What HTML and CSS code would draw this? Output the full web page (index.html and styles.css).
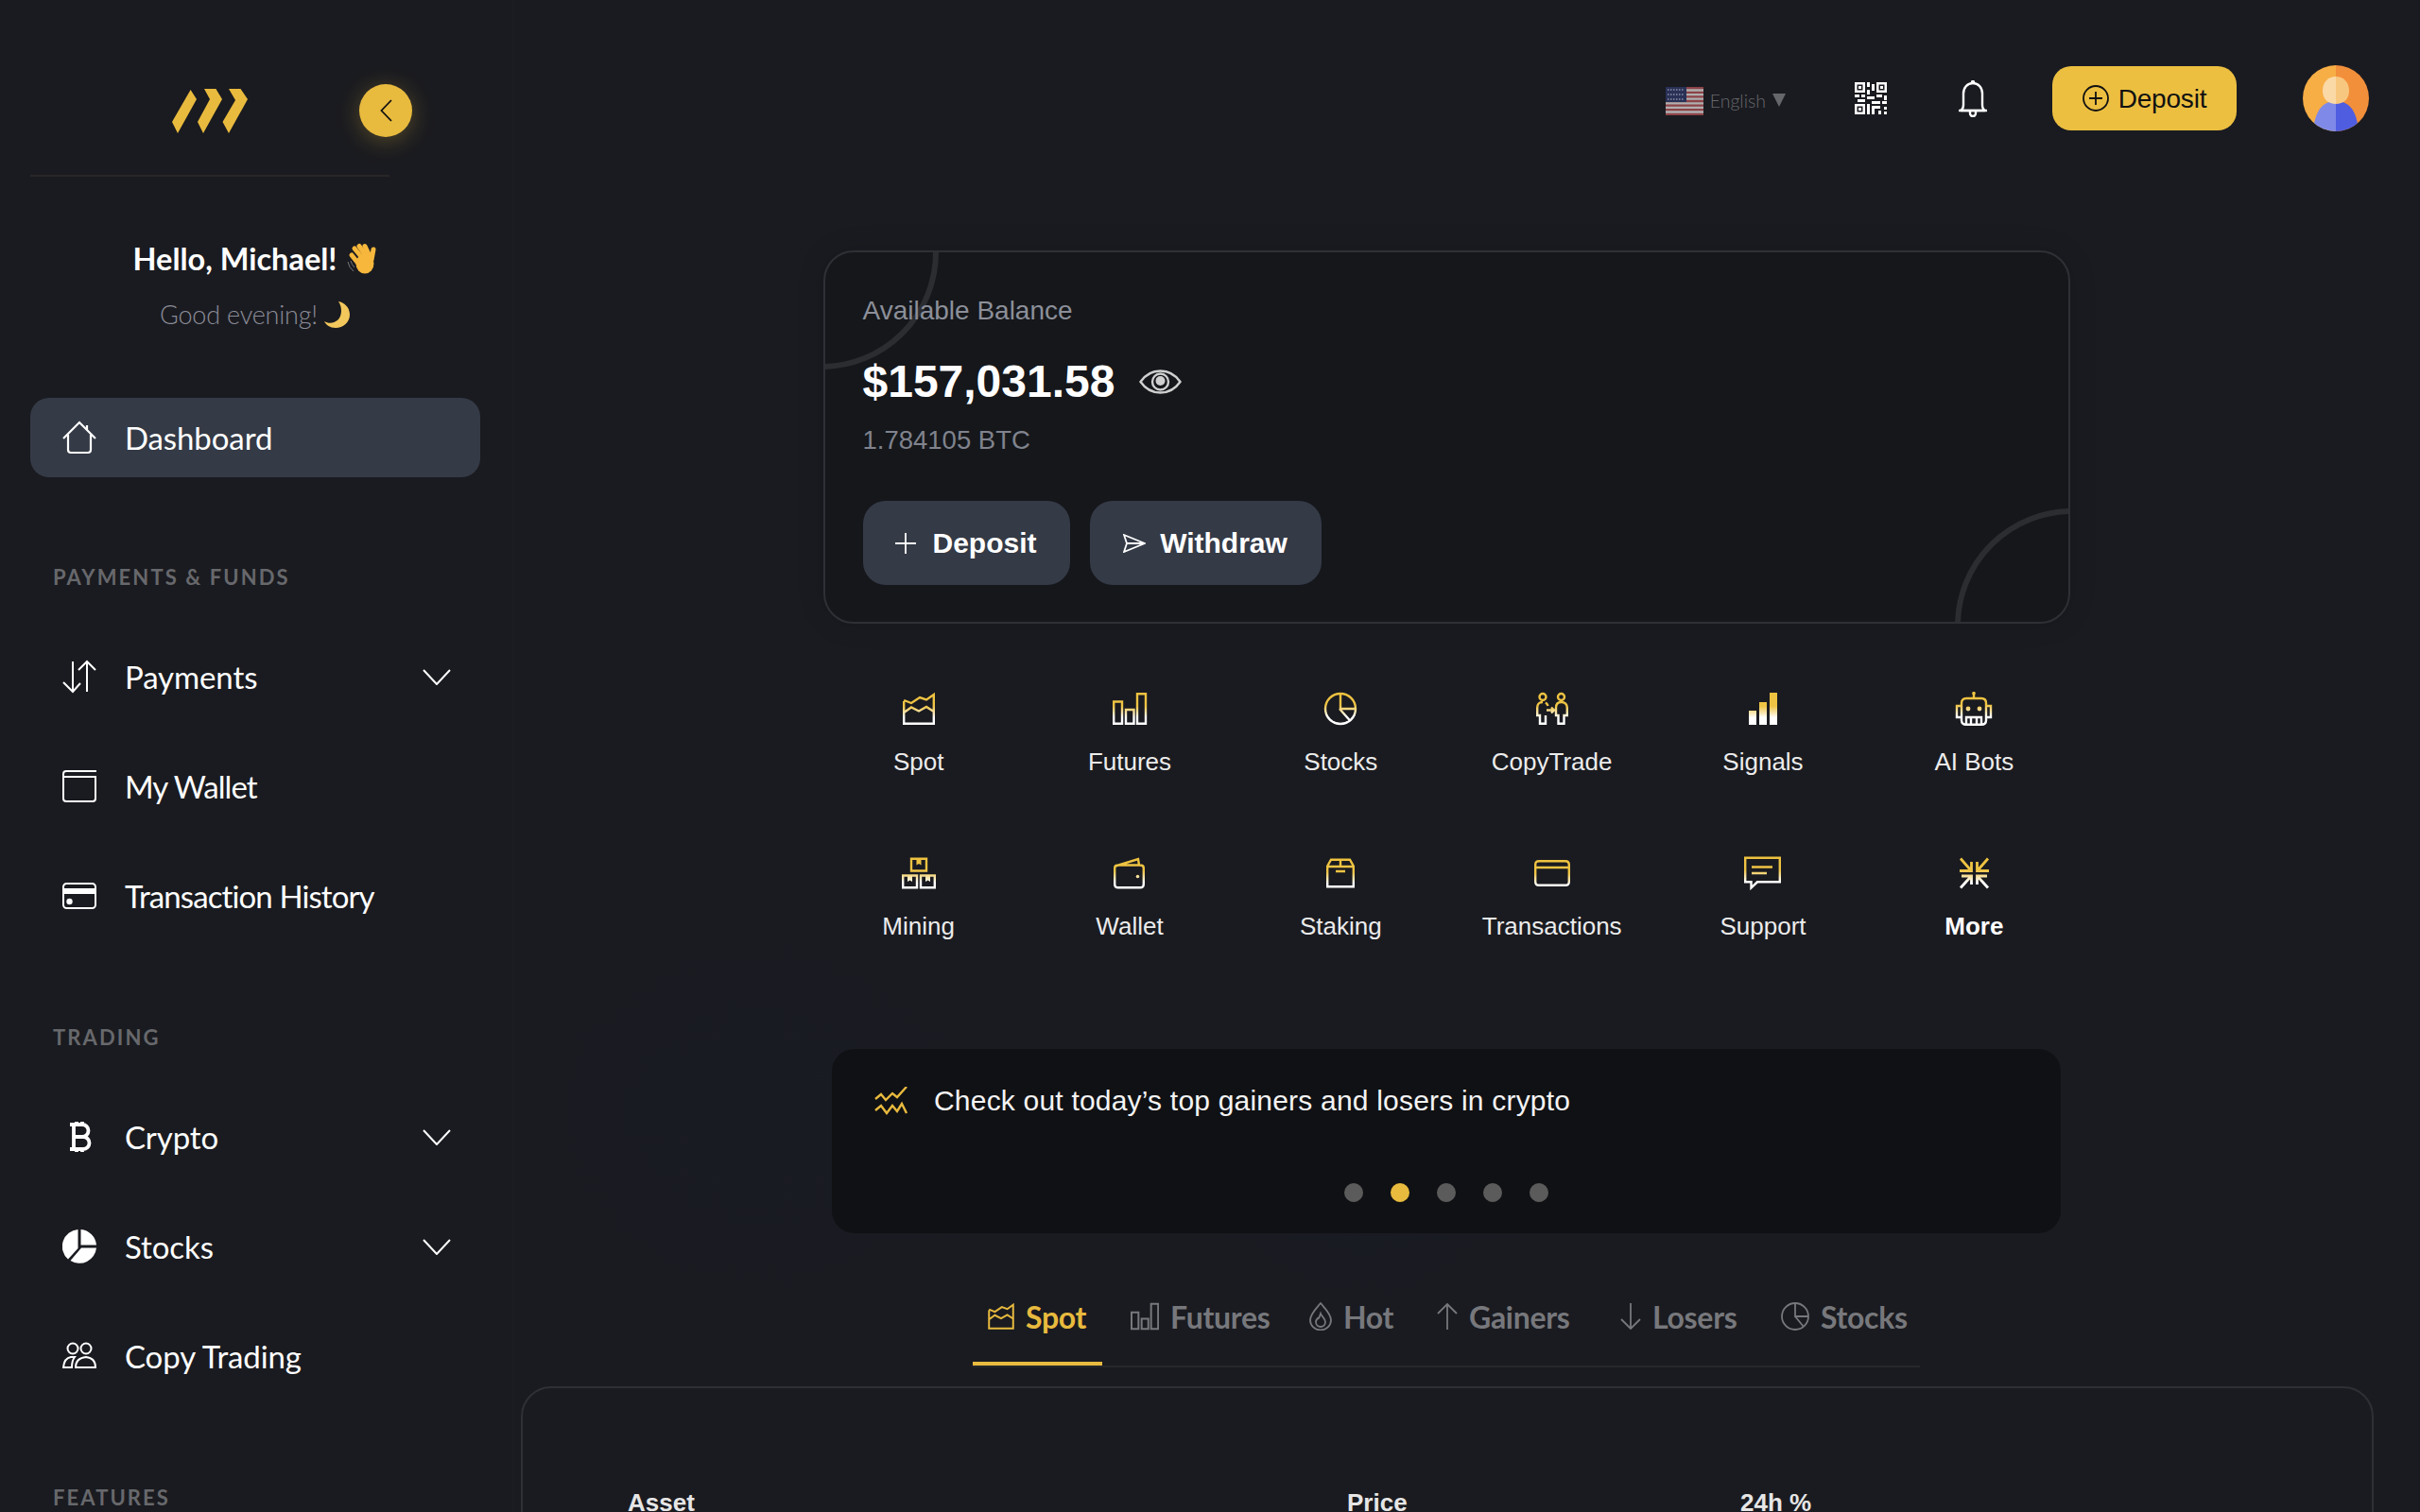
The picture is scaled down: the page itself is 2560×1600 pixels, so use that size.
FILE: index.html
```html
<!DOCTYPE html>
<html lang="en">
<head>
  <meta charset="UTF-8" />
  <meta name="viewport" content="width=device-width, initial-scale=1" />
  <title>Dashboard</title>
  <link rel="stylesheet" href="styles.css">
</head>
<body>
  <svg class="svg-defs" aria-hidden="true">
    <defs>
      <linearGradient id="gold" gradientUnits="userSpaceOnUse" x1="0" y1="0" x2="0" y2="34">
        <stop offset="0" stop-color="#eec23f" />
        <stop offset="0.42" stop-color="#efc445" />
        <stop offset="0.78" stop-color="#ffffff" />
      </linearGradient>
    </defs>
  </svg>

  <div class="app">
    <aside class="sidebar">
      <div class="brand">
        <svg class="logo" width="80" height="47" viewBox="0 0 80 47">
          <path d="M19.6 1 26 11 6 47 0 35Z M34 0H46.4L53 11 33 47 27 35 40 11Z M60 0H72.5L80 11 60 47 53.5 35 67 12Z" fill="#e8ba3e" />
        </svg>
        <button class="collapse">
          <svg width="13" height="24" viewBox="0 0 13 24"><path d="M12 1 1.500 12 12 23" fill="none" stroke="#111" stroke-width="1.800" /></svg>
        </button>
      </div>

      <div class="greeting">
        <div class="hello">Hello, Michael!
          <svg width="34" height="34" viewBox="0 0 34 34">
            <g stroke="#f6b73c" stroke-linecap="round" fill="none">
              <path d="M9 6 19 18" stroke-width="5" />
              <path d="M14 3.500 22 15" stroke-width="5" />
              <path d="M20 3.500 25 14" stroke-width="5" />
              <path d="M29 7 27 18" stroke-width="5" />
              <path d="M6 13 14 23" stroke-width="5" />
            </g>
            <ellipse cx="20" cy="22" rx="9.500" ry="10.500" fill="#f6b73c" />
            <path d="M2 20q1 6 6 10M5 19q1 4 4 7" stroke="#77787c" fill="none" />
          </svg>
        </div>
        <div class="subhello">Good evening!
          <svg width="28" height="28" viewBox="0 0 28 28">
            <path d="M15 0C21 1 27 6 27 14 27 22 20 28 12 28 6 28 2 25 0 21 5 24 11 23 15 19 19 14 19 6 15 0Z" fill="#f2c75c" />
          </svg>
        </div>
      </div>

      <a class="nav-link active">
        <svg class="nav-icon" viewBox="0 0 36 36"><path d="M1 19 18 2 35 19M6 15V31a3 3 0 0 0 3 3H27a3 3 0 0 0 3-3V15M26 5V10" fill="none" stroke="#fff" stroke-width="2.200" /></svg>
        Dashboard
      </a>

      <section class="nav-section">
        <h3 class="nav-label">PAYMENTS &amp; FUNDS</h3>
        <div class="nav-list">
          <a class="nav-link">
            <svg class="nav-icon" viewBox="0 0 36 36"><path d="M11 2V34M1 24 11 34 19 25M26 34V2M17 11 26 2 35 11" fill="none" stroke="#fff" stroke-width="2" /></svg>
            Payments
            <svg class="chevron" width="30" height="17" viewBox="0 0 30 17"><path d="M1 1 15 16 29 1" fill="none" stroke="#fff" stroke-width="2" /></svg>
          </a>
          <a class="nav-link nav-tight">
            <svg class="nav-icon" viewBox="0 0 36 36"><path d="M36 2H4A3 3 0 0 0 1 5V31a3 3 0 0 0 3 3H32a3 3 0 0 0 3-3V8H1" fill="none" stroke="#fff" stroke-width="2" /></svg>
            My Wallet
          </a>
          <a class="nav-link nav-tight">
            <svg class="nav-icon" viewBox="0 0 36 36">
              <rect x="1" y="5" width="34" height="26" rx="3.500" fill="none" stroke="#fff" stroke-width="2" />
              <rect x="1" y="10" width="34" height="6" fill="#fff" />
              <circle cx="7.500" cy="24" r="3.200" fill="#fff" />
            </svg>
            Transaction History
          </a>
        </div>
      </section>

      <section class="nav-section">
        <h3 class="nav-label">TRADING</h3>
        <div class="nav-list">
          <a class="nav-link">
            <svg class="nav-icon" viewBox="0 0 36 36"><path d="M8 5H21a6.500 6.500 0 0 1 0 13H11M11 18H22a6.500 6.500 0 0 1 0 13H8M12 5V31M15 2V5M21 2V5M15 31V34M21 31V34" fill="none" stroke="#fff" stroke-width="3.800" /></svg>
            Crypto
            <svg class="chevron" width="30" height="17" viewBox="0 0 30 17"><path d="M1 1 15 16 29 1" fill="none" stroke="#fff" stroke-width="2" /></svg>
          </a>
          <a class="nav-link">
            <svg class="nav-icon" viewBox="0 0 36 36">
              <path d="M16.500 0A18 18 0 0 0 6 31.500L16.500 20ZM19.500 0V16.500H36A18 18 0 0 0 19.500 0ZM20 19.500 8.500 33A18 18 0 0 0 36 19.500Z" fill="#fff" />
            </svg>
            Stocks
            <svg class="chevron" width="30" height="17" viewBox="0 0 30 17"><path d="M1 1 15 16 29 1" fill="none" stroke="#fff" stroke-width="2" /></svg>
          </a>
          <a class="nav-link">
            <svg class="nav-icon" viewBox="0 0 36 36" fill="none" stroke="#fff" stroke-width="2">
              <circle cx="11" cy="10" r="5.500" /><circle cx="25" cy="10" r="5.500" />
              <path d="M13 19H9Q2 20 1 30H10Q10 23 13 19Z" />
              <path d="M14 30Q14 20 25 19 35 20 35 30Z" />
            </svg>
            Copy Trading
          </a>
        </div>
      </section>

      <section class="nav-section">
        <h3 class="nav-label">FEATURES</h3>
      </section>
    </aside>

    <main class="main">
      <header class="topbar">
        <div class="lang">
          <svg class="flag" width="40" height="30" viewBox="0 0 40 30">
            <rect width="40" height="30" fill="#c9c9c9" />
            <path d="M0 1.200H40M0 5.800H40M0 10.400H40M0 15H40M0 19.600H40M0 24.200H40M0 28.800H40" stroke="#a24a50" stroke-width="2.300" />
            <rect width="22" height="16" fill="#2c3560" />
            <path d="M2 3H20M2 8H20M2 13H20" stroke="#9ea3bd" stroke-width="1.400" stroke-dasharray="1.500 1.500" />
          </svg>
          <span class="lang-name">English</span>
          <span class="lang-caret"></span>
        </div>

        <svg class="qr" width="34" height="34" viewBox="0 0 34 34" fill="#fff">
          <path fill-rule="evenodd" d="M0 0H11V11H0ZM2.500 2.500V8.500H8.500V2.500Z M23 0H34V11H23ZM25.500 2.500V8.500H31.500V2.500Z M0 23H11V34H0ZM2.500 25.500V31.500H8.500V25.500Z" />
          <rect x="4" y="4" width="3" height="3" /><rect x="27" y="4" width="3" height="3" /><rect x="4" y="27" width="3" height="3" />
          <rect x="13" y="0" width="3" height="5" /><rect x="18" y="2" width="3" height="7" /><rect x="13" y="8" width="3" height="5" />
          <rect x="0" y="13" width="5" height="3" /><rect x="7" y="13" width="4" height="3" /><rect x="3" y="18" width="8" height="3" />
          <rect x="13" y="15" width="8" height="3" /><rect x="23" y="13" width="6" height="3" /><rect x="31" y="14" width="3" height="5" />
          <rect x="18" y="20" width="9" height="3" /><rect x="29" y="20" width="5" height="3" /><rect x="13" y="23" width="3" height="11" />
          <rect x="18" y="25" width="9" height="3" /><rect x="18" y="28" width="3" height="6" /><rect x="25" y="30" width="3" height="4" /><rect x="31" y="26" width="3" height="3" /><rect x="31" y="31" width="3" height="3" />
        </svg>

        <svg class="bell" width="30" height="39" viewBox="0 0 30 39" fill="none" stroke="#fff" stroke-width="2.400">
          <path d="M15 3C9 3 5 8 5 14V26C5 29 4 31 2 32H28C26 31 25 29 25 26V14C25 8 21 3 15 3Z" />
          <path d="M0 32H30" />
          <path d="M12 33V35a3 3 0 0 0 6 0V33" />
          <circle cx="15" cy="2" r="1" />
        </svg>

        <button class="btn-deposit">
          <svg width="28" height="28" viewBox="0 0 28 28" fill="none" stroke="#111" stroke-width="1.800">
            <circle cx="14" cy="14" r="13" /><path d="M14 7V21M7 14H21" />
          </svg>
          <span class="btn-deposit-text">Deposit</span>
        </button>

        <svg class="avatar" width="70" height="70" viewBox="0 0 70 70">
          <defs><clipPath id="round"><circle cx="35" cy="35" r="35" /></clipPath></defs>
          <g clip-path="url(#round)">
            <rect width="35" height="70" fill="#f7ae45" />
            <rect x="35" width="35" height="70" fill="#f28f3b" />
            <path d="M35 38C23 38 13 45 11 70H35Z" fill="#7f8ae8" />
            <path d="M35 38C47 38 57 45 59 70H35Z" fill="#4f5de0" />
            <path d="M35 12C27 12 21 18 21 27 21 36 27 41 35 41Z" fill="#fbd9a7" />
            <path d="M35 12C43 12 49 18 49 27 49 36 43 41 35 41Z" fill="#f8c77f" />
          </g>
        </svg>
      </header>

      <section class="balance-card">
        <div class="ring ring-top"></div>
        <div class="ring ring-bottom"></div>
        <div class="balance-label">Available Balance</div>
        <div class="balance-row">
          <span class="balance-amount">$157,031.58</span>
          <svg width="45" height="26" viewBox="0 0 45 26" fill="none" stroke="#cfcfcf" stroke-width="2.400">
            <path d="M1.500 13C7 5 14 1.500 22.500 1.500S38 5 43.500 13C38 21 31 24.500 22.500 24.500S7 21 1.500 13Z" />
            <circle cx="22.500" cy="13" r="8.500" />
            <circle cx="22.500" cy="12" r="5" fill="#cfcfcf" stroke="none" />
          </svg>
        </div>
        <div class="balance-btc">1.784105 BTC</div>
        <div class="balance-actions">
          <button class="btn-dark btn-dark-deposit">
            <svg width="22" height="22" viewBox="0 0 22 22"><path d="M11 0V22M0 11H22" stroke="#fff" stroke-width="1.800" /></svg>
            Deposit
          </button>
          <button class="btn-dark btn-dark-withdraw">
            <svg width="24" height="20" viewBox="0 0 24 20" fill="none" stroke="#fff" stroke-width="1.800"><path d="M1 1 23 10 1 19 4 10ZM4 10H23" /></svg>
            Withdraw
          </button>
        </div>
      </section>

      <section class="tiles">
        <div class="tile">
          <svg class="tile-icon" width="34" height="34" viewBox="0 0 34 34"><path class="gs" d="M1.200 9V32.800H32.800V2L25 7.500 18 5 9 11 1.200 8M1.200 21 9 15.500 17 19.500 25 15 32.800 20" /></svg>
          <span>Spot</span>
        </div>
        <div class="tile">
          <svg class="tile-icon" width="36" height="34" viewBox="0 0 36 34"><path class="gs" d="M1.200 9.500H10V32.800H1.200ZM14 18H22.500V32.800H14ZM26 1.200H35V32.800H26Z" /></svg>
          <span>Futures</span>
        </div>
        <div class="tile">
          <svg class="tile-icon" width="36" height="36" viewBox="0 0 36 36"><circle class="gs" cx="18" cy="18" r="16" /><path class="gs" d="M18 2V18H34M17 18 28.500 31" /></svg>
          <span>Stocks</span>
        </div>
        <div class="tile">
          <svg class="tile-icon" width="34" height="34" viewBox="0 0 34 34">
            <circle class="gs" cx="7" cy="4.500" r="3.500" /><circle class="gs" cx="26.500" cy="4.500" r="3.500" />
            <path class="gs" d="M7 10Q1.200 10 1.200 16V24H4V32.800H10V24M26.500 10Q21 10 21 16V24H23.500V32.800H29.500V24H32.800V16Q32.800 10 26.500 10ZM10 10.500Q12 12 12.500 14M11 18.500H19M16 15.500 19 18.500 16 21.500" />
          </svg>
          <span>CopyTrade</span>
        </div>
        <div class="tile">
          <svg class="tile-icon" width="30" height="34" viewBox="0 0 30 34"><path class="gf" d="M0 19H8V34H0ZM11 10H19V34H11ZM22 0H30V34H22Z" /></svg>
          <span>Signals</span>
        </div>
        <div class="tile">
          <svg class="tile-icon" width="40" height="36" viewBox="0 0 40 36">
            <path class="gs" d="M20 0V7M12 7H28Q33 7 33 12V30Q33 34.800 28 34.800H12Q7 34.800 7 30V12Q7 7 12 7ZM7 15H2V27H7M33 15H38V27H33M12 34V27H28V34M17 27V34M23 27V34" />
            <circle cx="20" cy="1.800" r="1.800" fill="url(#gold)" />
            <circle cx="14" cy="18" r="2.400" fill="url(#gold)" /><circle cx="26" cy="18" r="2.400" fill="url(#gold)" />
          </svg>
          <span>AI Bots</span>
        </div>

        <div class="tile">
          <svg class="tile-icon" width="36" height="33" viewBox="0 0 36 33">
            <path class="gs" d="M10 1.200H26V14H10ZM1.200 19H16V31.800H1.200ZM20 19H34.800V31.800H20Z" />
            <path class="gf" d="M15.500 1.500H20.500V8L18 6.500 15.500 8ZM6 19H11V25.500L8.500 24 6 25.500ZM25 19H30V25.500L27.500 24 25 25.500Z" />
          </svg>
          <span>Mining</span>
        </div>
        <div class="tile">
          <svg class="tile-icon" width="33" height="33" viewBox="0 0 33 33">
            <path class="gs" d="M1.200 11Q1.200 8 5 8H28Q31.800 8 31.800 11V28Q31.800 31.800 28 31.800H5Q1.200 31.800 1.200 28ZM2 9 26 1.500 27 8" />
            <circle cx="25.500" cy="20" r="1.800" fill="url(#gold)" />
          </svg>
          <span>Wallet</span>
        </div>
        <div class="tile">
          <svg class="tile-icon" width="30" height="31" viewBox="0 0 30 31">
            <path class="gs" d="M1.200 8V29.800H28.800V8L25 1.200H5ZM1.200 8.500H28.800M15 1.500V8.500M10 13.500H20" />
          </svg>
          <span>Staking</span>
        </div>
        <div class="tile">
          <svg class="tile-icon" width="38" height="28" viewBox="0 0 38 28">
            <path class="gs" d="M5 1.200H33Q36.800 1.200 36.800 5V23Q36.800 26.800 33 26.800H5Q1.200 26.800 1.200 23V5Q1.200 1.200 5 1.200ZM1.200 8H36.800" />
          </svg>
          <span>Transactions</span>
        </div>
        <div class="tile">
          <svg class="tile-icon" width="39" height="35" viewBox="0 0 39 35">
            <path class="gs" d="M1.200 1.200H37.800V26.800H14L7.500 33V26.800H1.200ZM8 11H30M8 17.500H24" />
          </svg>
          <span>Support</span>
        </div>
        <div class="tile tile-more">
          <svg class="tile-icon" width="35" height="34" viewBox="0 0 35 34">
            <path class="gs gs-bold" d="M3 1.500 13 13M2 14.500H14.500V5M32 1.500 22 13M33 14.500H20.500V5M13 21.500 3 32.500M4 20H14.500V29M22 21.500 32 32.500M31 20H20.500V29" />
          </svg>
          <span>More</span>
        </div>
      </section>

      <section class="banner">
        <div class="banner-text">
          <svg width="36" height="30" viewBox="0 0 36 30" fill="none" stroke="#e8ba3e" stroke-width="2.400">
            <path d="M1 13 7 8 12 14 19 7 24 11 34 0M1 25 7 20 13 28 19 20 24 26 29 18 34 28" />
          </svg>
          Check out today’s top gainers and losers in crypto
        </div>
        <div class="dots">
          <span class="dot"></span>
          <span class="dot dot-active"></span>
          <span class="dot"></span>
          <span class="dot"></span>
          <span class="dot"></span>
        </div>
      </section>

      <nav class="tabs">
        <a class="tab tab-active">
          <svg width="28" height="30" viewBox="0 0 34 34"><path d="M1.500 9V32.500H32.500V2L25 7.500 18 5 9 11 1.500 8M1.500 21 9 15.500 17 19.500 25 15 32.500 20" fill="none" stroke="currentColor" stroke-width="2.400" /></svg>
          Spot
        </a>
        <a class="tab">
          <svg width="30" height="30" viewBox="0 0 36 34"><path d="M1.200 12H10V32.800H1.200ZM14 20H22.500V32.800H14ZM26 1.200H35V32.800H26Z" fill="none" stroke="currentColor" stroke-width="2.400" /></svg>
          Futures
        </a>
        <a class="tab">
          <svg width="24" height="30" viewBox="0 0 24 30" fill="none" stroke="currentColor" stroke-width="1.800"><path d="M12 1C16 6 23 12 23 19A11 10.500 0 0 1 1 19C1 12 8 6 12 1Z" /><path d="M12 12C13 15 17 17 17 21A5 5 0 0 1 7 21C7 19 8 18 9 17 10 18 11 15 12 12Z" /></svg>
          Hot
        </a>
        <a class="tab">
          <svg width="22" height="28" viewBox="0 0 22 28"><path d="M11 28V1M1 11 11 1 21 11" fill="none" stroke="currentColor" stroke-width="1.800" /></svg>
          Gainers
        </a>
        <a class="tab">
          <svg width="22" height="28" viewBox="0 0 22 28"><path d="M11 0V27M1 17 11 27 21 17" fill="none" stroke="currentColor" stroke-width="1.800" /></svg>
          Losers
        </a>
        <a class="tab">
          <svg width="30" height="30" viewBox="0 0 30 30" fill="none" stroke="currentColor" stroke-width="1.800"><circle cx="15" cy="15" r="14" /><path d="M15 1V15H29M15 15 24 26" /></svg>
          Stocks
        </a>
      </nav>

      <section class="market">
        <div class="market-head">
          <span>Asset</span>
          <span>Price</span>
          <span>24h %</span>
        </div>
      </section>
    </main>
  </div>
</body>
</html>
```

FILE: styles.css
```css
:root {
  --bg-color: #1a1b20;
  --card-color: #15171b;
  --line-color: #2e3035;
  --btn-color: #343a46;
  --gold: #e8ba3e;
}
* {
  box-sizing: border-box;
}
html, body {
  margin: 0;
  height: 100%;
}
body {
  background-color: var(--bg-color);
  color: #fff;
  font-family: 'Liberation Sans', Arial, sans-serif;
  overflow: hidden;
}
button {
  border: none;
  font-family: inherit;
  cursor: pointer;
}
.svg-defs {
  display: block;
  width: 0;
  height: 0;
}
.app {
  display: flex;
  height: 1600px;
  overflow: hidden;
}

/* Sidebar */
.sidebar {
  width: 544px;
  flex: none;
  padding: 0 34px 0 32px;
  font-family: 'Lato', sans-serif;
  border-right: 2px solid #1c1d22;
}
.brand {
  width: 380px;
  display: flex;
  align-items: center;
  padding: 89px 0 40px 150px;
  border-bottom: 2px solid #2a2527;
}
.collapse {
  width: 56px;
  height: 56px;
  flex: none;
  margin-left: 118px;
  margin-right: -24px;
  border-radius: 50%;
  background: var(--gold);
  box-shadow: 0 4px 24px rgba(232, 186, 62, 0.3);
  display: flex;
  align-items: center;
  justify-content: center;
  padding: 0;
}
.greeting {
  text-align: center;
  margin-top: 67px;
}
.hello {
  font-size: 32.500px;
  font-weight: 700;
  line-height: 40px;
  display: flex;
  align-items: center;
  justify-content: center;
  gap: 9px;
}
.subhello {
  font-size: 27px;
  font-weight: 300;
  letter-spacing: -0.2px;
  line-height: 36px;
  color: #8b8c98;
  margin-top: 21px;
  display: flex;
  align-items: center;
  justify-content: center;
  gap: 7px;
}
.nav-link {
  height: 84px;
  display: flex;
  align-items: center;
  gap: 30px;
  padding: 0 31px 0 34px;
  font-size: 33px;
  letter-spacing: -0.1px;
  color: #fff;
  border-radius: 20px;
}
.nav-tight {
  letter-spacing: -0.9px;
}
.nav-link.active {
  background: var(--btn-color);
  margin-top: 70px;
}
.nav-icon {
  width: 36px;
  height: 36px;
  flex: none;
}
.chevron {
  margin-left: auto;
}
.nav-section {
  margin-top: 92px;
}
.nav-section + .nav-section {
  margin-top: 94px;
}
.nav-label {
  margin: 0 0 49px 24px;
  font-size: 22px;
  font-weight: 700;
  line-height: 28px;
  letter-spacing: 2.100px;
  color: #67686c;
}
.nav-list {
  display: flex;
  flex-direction: column;
  gap: 32px;
}

/* Main column */
.main {
  flex: 1;
  padding: 69px 49px 0 5px;
  background:
    radial-gradient(420px 360px at 260px 1180px, #191b23, transparent),
    radial-gradient(300px 260px at 900px 1240px, #191b23, transparent);
}
.topbar {
  height: 70px;
  display: flex;
  align-items: center;
  justify-content: flex-end;
  padding-right: 5px;
}
.lang {
  display: flex;
  align-items: center;
  font-family: 'Lato', sans-serif;
  margin: 6px 73px 0 0;
}
.flag {
  opacity: 0.85;
}
.lang-name {
  margin: -2px 0 0 7px;
  font-size: 19.500px;
  font-weight: 300;
  color: #66676b;
}
.lang-caret {
  width: 0;
  height: 0;
  margin: -2px 0 0 7px;
  border-left: 7.500px solid transparent;
  border-right: 7.500px solid transparent;
  border-top: 14px solid #66676b;
}
.bell {
  margin-left: 76px;
}
.btn-deposit {
  width: 195px;
  height: 68px;
  margin-left: 69px;
  border-radius: 20px;
  background: #ecbf41;
  color: #111;
  font-size: 28px;
  display: flex;
  align-items: center;
  justify-content: center;
  gap: 10px;
  padding: 0;
}
.btn-deposit-text {
  margin-top: 2px;
  letter-spacing: -0.2px;
}
.avatar {
  margin-left: 70px;
}

/* Balance card */
.balance-card {
  position: relative;
  overflow: hidden;
  width: 1319px;
  height: 395px;
  margin: 126px auto 0;
  padding: 45px 40px 0;
  background: var(--card-color);
  border: 2px solid var(--line-color);
  border-radius: 32px;
  box-shadow: 0 0 30px rgba(0, 0, 0, 0.12);
}
.ring {
  position: absolute;
  width: 248px;
  height: 248px;
  border: 6px solid #2b2d31;
  border-radius: 50%;
}
.ring-top {
  top: -124px;
  left: -128px;
}
.ring-bottom {
  right: -128px;
  bottom: -128px;
}
.balance-label {
  position: relative;
  font-size: 28px;
  line-height: 34px;
  color: #8c8f99;
}
.balance-row {
  position: relative;
  display: flex;
  align-items: center;
  gap: 26px;
  margin-top: 28px;
}
.balance-amount {
  font-size: 48px;
  font-weight: 700;
  line-height: 60px;
}
.balance-btc {
  position: relative;
  font-size: 27.500px;
  line-height: 34px;
  color: #80838d;
  margin-top: 15px;
}
.balance-actions {
  position: relative;
  display: flex;
  gap: 21px;
  margin-top: 47px;
}
.btn-dark {
  height: 89px;
  border-radius: 24px;
  background: var(--btn-color);
  color: #fff;
  font-size: 30px;
  font-weight: 700;
  display: flex;
  align-items: center;
  justify-content: center;
  gap: 17px;
  padding: 0;
}
.btn-dark-deposit {
  width: 219px;
}
.btn-dark-withdraw {
  width: 245px;
  gap: 15px;
}

/* Shortcut tiles */
.tiles {
  width: 1340px;
  margin: 70px auto 0;
  display: grid;
  grid-template-columns: repeat(6, 1fr);
  row-gap: 82px;
}
.tile {
  display: flex;
  flex-direction: column;
  align-items: center;
  font-size: 26px;
  line-height: 32px;
  color: #ececec;
}
.tile-icon {
  height: 40px;
  overflow: visible;
  margin-bottom: 20px;
}
.tile-more {
  color: #fff;
  font-weight: 700;
}
.gs {
  fill: none;
  stroke: url(#gold);
  stroke-width: 2.400;
}
.gs-bold {
  stroke-width: 2.800;
}
.gf {
  fill: url(#gold);
}

/* Banner */
.banner {
  width: 1300px;
  height: 195px;
  margin: 114px auto 0;
  padding: 32px 45px 0;
  background: #101114;
  border-radius: 24px;
}
.banner-text {
  display: flex;
  align-items: center;
  gap: 27px;
  font-size: 30px;
  letter-spacing: 0.2px;
  line-height: 46px;
  color: #f4f4f4;
}
.dots {
  display: flex;
  justify-content: center;
  gap: 29px;
  margin-top: 64px;
}
.dot {
  width: 20px;
  height: 20px;
  border-radius: 50%;
  background: #5b5b5b;
}
.dot-active {
  background: var(--gold);
}

/* Tabs */
.tabs {
  width: 1002px;
  margin: 50px auto 0;
  display: grid;
  grid-template-columns: 137px 175px 121px 180px 156px 163px;
  gap: 14px;
  border-bottom: 2px solid #26272b;
  font-family: 'Lato', sans-serif;
}
.tab {
  height: 90px;
  padding: 0 0 10px 16px;
  display: flex;
  align-items: center;
  gap: 12px;
  font-size: 32px;
  letter-spacing: -0.3px;
  font-weight: 700;
  color: #77787c;
  border-bottom: 4px solid transparent;
}
.tab-active {
  color: var(--gold);
  border-bottom-color: var(--gold);
}

/* Market table */
.market {
  height: 600px;
  margin: 20px 0 0 2px;
  padding: 105px 0 0 111px;
  border: 2px solid var(--line-color);
  border-radius: 32px;
}
.market-head {
  display: grid;
  grid-template-columns: 761px 416px 1fr;
  font-size: 26px;
  font-weight: 700;
  line-height: 32px;
  color: #e6e6e6;
}
```
